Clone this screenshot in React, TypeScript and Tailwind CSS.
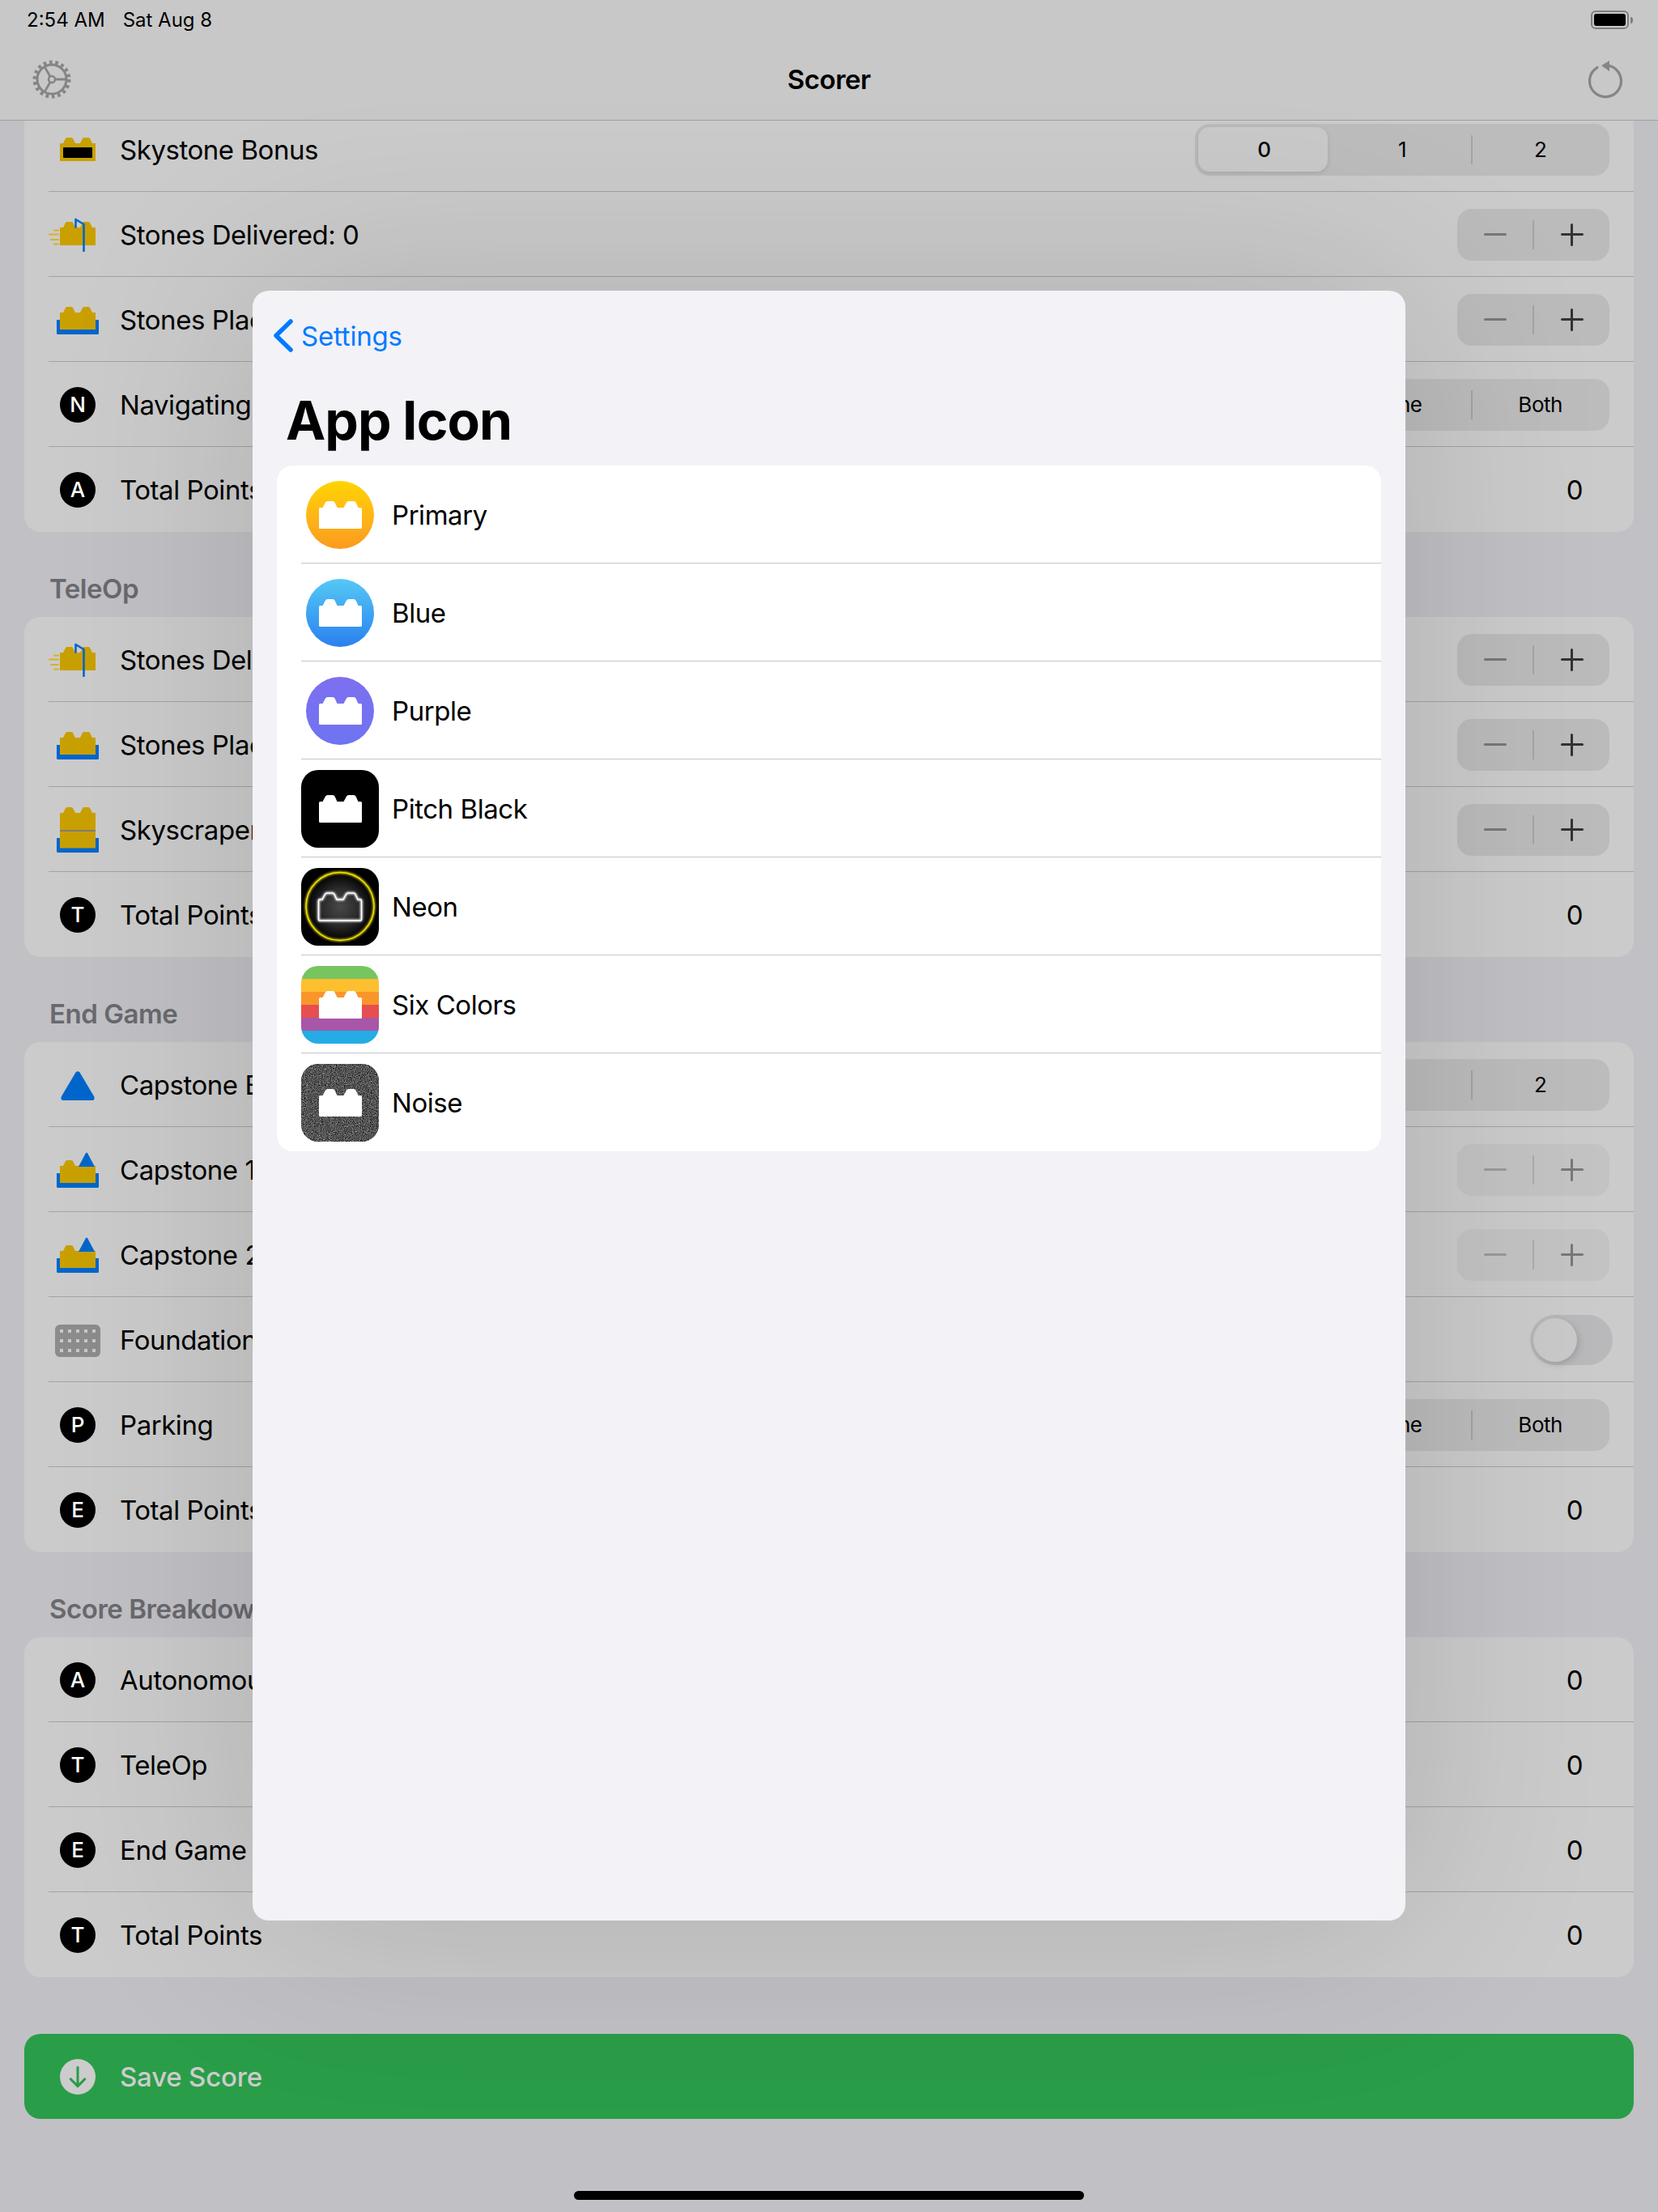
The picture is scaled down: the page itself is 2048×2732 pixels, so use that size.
import React from "react";

const GOLD = "#c9a000";
const BLUE = "#0066cc";
const brickPath = "M1.5 8H4.5L8 1.5Q8.8 0 10.5 0H17Q18.7 0 19.5 1.5L22.5 8H30.5L34 1.5Q34.8 0 36.5 0H43Q44.7 0 45.5 1.5L48.5 8H51.5Q53 8 53 9.5V32.5Q53 34 51.5 34H1.5Q0 34 0 32.5V9.5Q0 8 1.5 8Z";

function Brick({ className = "" }: { className?: string }) {
  return (
    <svg viewBox="0 0 53 34" className={className}>
      <path d={brickPath} fill="#fff" />
    </svg>
  );
}

function SkystoneIcon() {
  return (
    <svg viewBox="0 0 44 29" className="w-[44px] h-[29px] block">
      <path d="M0 7H4L7 1Q7.5 0 9 0H14Q15.5 0 16 1L19 7H25L28 1Q28.5 0 30 0H35Q36.5 0 37 1L40 7H44V29H0Z" fill={GOLD} />
      <rect x="4" y="12" width="36" height="13" rx="1" fill="#000" />
    </svg>
  );
}

function DeliveredIcon() {
  return (
    <svg viewBox="0 0 62 42" className="w-[62px] h-[42px] block mr-[10px]">
      <path d="M14 12H18L21 6Q21.5 5 23 5H28Q29.5 5 30 6L33 12H39L42 6Q42.5 5 44 5H49Q50.5 5 51 6L54 12H58V34H14Z" fill={GOLD} />
      <path d="M33.5 2L43.5 8M33.5 2V11.5M43.5 8V41" stroke={BLUE} strokeWidth="2.6" fill="none" strokeLinecap="round" strokeLinejoin="round" />
      <path d="M7 15.5H12M1 20.5H12M3 27H12M7 32.5H12" stroke="#d6b222" strokeWidth="2" strokeLinecap="round" />
    </svg>
  );
}

function PlacedIcon() {
  return (
    <svg viewBox="0 0 52 34" className="w-[52px] h-[34px] block mt-[3px]">
      <path d="M0 16H4V28H48V16H52V32.5Q52 34 50.5 34H1.5Q0 34 0 32.5Z" fill={BLUE} />
      <path d="M4 7H8L11 1Q11.5 0 13 0H18Q19.5 0 20 1L23 7H29L32 1Q32.5 0 34 0H39Q40.5 0 41 1L44 7H48V28H4Z" fill={GOLD} />
    </svg>
  );
}

function SkyscraperIcon() {
  return (
    <svg viewBox="0 0 52 56" className="w-[52px] h-[56px] block">
      <path d="M0 38H4V50H48V38H52V54.5Q52 56 50.5 56H1.5Q0 56 0 54.5Z" fill={BLUE} />
      <path d="M4 7H8L11 1Q11.5 0 13 0H18Q19.5 0 20 1L23 7H29L32 1Q32.5 0 34 0H39Q40.5 0 41 1L44 7H48V50.5H4Z" fill={GOLD} />
      <rect x="4" y="28" width="44" height="2" fill="#7d7d7d" />
    </svg>
  );
}

function CapTriangle() {
  return (
    <svg viewBox="0 0 42 36" className="w-[42px] h-[36px] block mt-[3px]">
      <path d="M18.5 1.5Q21 -1 23.5 1.5L41 31Q43 36 38 36H4Q-1 36 1 31Z" fill={BLUE} />
    </svg>
  );
}

function CapOnStoneIcon() {
  return (
    <svg viewBox="0 0 52 44" className="w-[52px] h-[44px] block">
      <path d="M0 26H4V38H48V26H52V42.5Q52 44 50.5 44H1.5Q0 44 0 42.5Z" fill={BLUE} />
      <path d="M4 17H8L11 11Q11.5 10 13 10H18Q19.5 10 20 11L23 17H48V38H4Z" fill={GOLD} />
      <path d="M27 18L36 1Q37 0 38 1L47 18Z" fill={BLUE} />
    </svg>
  );
}

function FoundationIcon() {
  return (
    <div className="w-[56px] h-[40px] mt-[3px] rounded-[6px] bg-[#8c8c8c] grid grid-cols-5 gap-x-[6px] gap-y-[8px] px-[6px] py-[6px]">
      {Array.from({ length: 15 }).map((_, i) => (
        <div key={i} className="w-[4px] h-[4px] bg-[#c8c8c8] justify-self-center" />
      ))}
    </div>
  );
}

function LetterIcon({ letter }: { letter: string }) {
  return (
    <div className="w-[44px] h-[44px] rounded-full bg-black text-white flex items-center justify-center text-[26px] font-medium leading-none tracking-normal">
      {letter}
    </div>
  );
}

function Segmented({ items, selected }: { items: string[]; selected?: number }) {
  return (
    <div className="relative w-[512px] h-[64px] rounded-[18px] bg-black/[0.07] flex items-center text-[26px] text-black">
      {items.map((t, i) => (
        <div key={i} className="relative flex-1 h-full flex items-center justify-center">
          {i === selected && (
            <div className="absolute left-[4px] right-[7px] top-[4px] bottom-[5px] rounded-[14px] bg-[#c9c9c9] shadow-[0_2px_6px_rgba(0,0,0,0.1)]" />
          )}
          {i === 2 && <div className="absolute left-0 top-[14px] h-[36px] w-[2px] bg-black/[0.13]" />}
          <span className={`relative ${i === selected ? "font-medium" : ""}`}>{t}</span>
        </div>
      ))}
    </div>
  );
}

function Stepper({ disabled }: { disabled?: boolean }) {
  const c = disabled ? "bg-[#787878]" : "bg-[#333333]";
  const m = disabled ? "bg-[#9a9a9a]" : "bg-[#777777]";
  return (
    <div className={`w-[188px] h-[64px] rounded-[18px] flex items-center ${disabled ? "bg-black/[0.04]" : "bg-black/[0.08]"}`}>
      <div className="flex-1 flex items-center justify-center">
        <div className={`w-[28px] h-[3px] rounded-full ${m}`} />
      </div>
      <div className="w-[2px] h-[36px] bg-black/[0.12]" />
      <div className="flex-1 flex items-center justify-center">
        <div className="relative w-[28px] h-[28px]">
          <div className={`absolute left-0 top-[12.5px] w-[28px] h-[3px] rounded-full ${c}`} />
          <div className={`absolute top-0 left-[12.5px] w-[3px] h-[28px] rounded-full ${c}`} />
        </div>
      </div>
    </div>
  );
}

function Toggle() {
  return (
    <div className="relative w-[102px] h-[62px] rounded-full bg-[#b9b9bb] mr-[-4px]">
      <div className="absolute left-[4px] top-[4px] w-[54px] h-[54px] rounded-full bg-[#c9c9c9] shadow-[2px_3px_8px_rgba(0,0,0,0.15)]" />
    </div>
  );
}

function Value() {
  return <span className="mr-[33px] pt-[1px]">0</span>;
}

function Row({ icon, label, right, last, clip }: { icon: React.ReactNode; label: string; right?: React.ReactNode; last?: boolean; clip?: boolean }) {
  return (
    <div className="h-[105px] pl-[30px]">
      <div className={`h-full flex items-center pr-[30px] ${last ? "" : "shadow-[inset_0_-1px_0_#a3a3a3]"}`}>
        <div className="w-[72px] flex items-center justify-center shrink-0">{icon}</div>
        <div className="ml-[16px] flex-1 min-w-0 pt-[1px]">
          <div className={`whitespace-nowrap ${clip ? "w-[164px] overflow-hidden" : ""}`}>{label}</div>
        </div>
        {right}
      </div>
    </div>
  );
}

function Card({ children }: { children: React.ReactNode }) {
  return <div className="mx-[30px] rounded-[20px] bg-[#cbcbcb] overflow-hidden">{children}</div>;
}

function Header({ children }: { children: React.ReactNode }) {
  return (
    <div className="h-[105px] pl-[61px] pb-[14px] flex items-end text-[#69696d] font-semibold leading-[41px]">
      {children}
    </div>
  );
}

function AppIconRow({ icon, label, last }: { icon: React.ReactNode; label: string; last?: boolean }) {
  return (
    <div className="h-[121px] pl-[30px]">
      <div className={`h-full flex items-center ${last ? "" : "shadow-[inset_0_-1px_0_#c6c6c8]"}`}>
        <div className="w-[96px] h-[96px] flex items-center justify-center shrink-0">{icon}</div>
        <span className="ml-[16px] pt-[1px]">{label}</span>
      </div>
    </div>
  );
}

function Circle({ className }: { className: string }) {
  return (
    <div className={`w-[84px] h-[84px] rounded-full flex items-center justify-center ${className}`}>
      <Brick className="w-[53px] h-[34px]" />
    </div>
  );
}

function Neon() {
  return (
    <svg viewBox="0 0 96 96" className="w-[96px] h-[96px] block rounded-[21px]">
      <defs>
        <radialGradient id="neonbg">
          <stop offset="0" stopColor="#484848" />
          <stop offset="0.55" stopColor="#2a2a2a" />
          <stop offset="1" stopColor="#000" />
        </radialGradient>
        <filter id="glow" x="-30%" y="-30%" width="160%" height="160%">
          <feGaussianBlur stdDeviation="1.6" result="b" />
          <feMerge>
            <feMergeNode in="b" />
            <feMergeNode in="b" />
            <feMergeNode in="SourceGraphic" />
          </feMerge>
        </filter>
      </defs>
      <rect width="96" height="96" fill="#000" />
      <circle cx="48" cy="48" r="42" fill="url(#neonbg)" />
      <circle cx="48" cy="47.5" r="42" fill="none" stroke="#f0e000" strokeWidth="1.5" filter="url(#glow)" />
      <g transform="translate(21.5 31)" filter="url(#glow)">
        <path d={brickPath} fill="none" stroke="#ffffff" strokeWidth="1.5" />
      </g>
    </svg>
  );
}

function SixColors() {
  const colors = ["bg-[#77c55f]", "bg-[#fdbf2f]", "bg-[#f9962a]", "bg-[#e54f4f]", "bg-[#a856a8]", "bg-[#25ace5]"];
  return (
    <div className="relative w-[96px] h-[96px] rounded-[21px] overflow-hidden flex flex-col">
      {colors.map((c) => (
        <div key={c} className={`h-[16px] ${c}`} />
      ))}
      <Brick className="absolute left-[21.5px] top-[31px] w-[53px] h-[34px]" />
    </div>
  );
}

function Noise() {
  return (
    <div className="relative w-[96px] h-[96px] rounded-[21px] overflow-hidden bg-[#555]">
      <svg viewBox="0 0 96 96" className="w-[96px] h-[96px] block">
        <filter id="noise" colorInterpolationFilters="sRGB" x="0" y="0" width="100%" height="100%">
          <feTurbulence type="fractalNoise" baseFrequency="0.9" numOctaves="2" seed="3" />
          <feColorMatrix values="0.55 0.55 0.55 0 -0.5 0.55 0.55 0.55 0 -0.5 0.55 0.55 0.55 0 -0.5 0 0 0 0 1" />
        </filter>
        <rect width="96" height="96" filter="url(#noise)" />
      </svg>
      <Brick className="absolute left-[21.5px] top-[31px] w-[53px] h-[34px]" />
    </div>
  );
}

function Gear() {
  return (
    <svg viewBox="0 0 48 46" className="w-[48px] h-[46px] block overflow-visible">
      <circle cx="24" cy="23" r="21" fill="none" stroke="#858585" strokeWidth="5" strokeDasharray="3.6 3.73" />
      <circle cx="24" cy="23" r="18" fill="none" stroke="#858585" strokeWidth="3" />
      <circle cx="24" cy="23" r="4" fill="none" stroke="#858585" strokeWidth="2.5" />
      <path d="M28 23H42M22 19.5L15 7.4M22 26.5L15 38.6" stroke="#858585" strokeWidth="2.8" fill="none" />
    </svg>
  );
}

function Reset() {
  return (
    <svg viewBox="0 0 42 46" className="w-[42px] h-[46px] block overflow-visible">
      <path d="M25 6.2A19.5 19.5 0 1 1 10 8.3" fill="none" stroke="#858585" strokeWidth="3.2" strokeLinecap="round" />
      <path d="M25 0V13L15 6Z" fill="#858585" />
    </svg>
  );
}

export default function App() {
  return (
    <div
      className="relative w-[2048px] h-[2732px] overflow-hidden bg-[#c0c0c5] text-black text-[33px] leading-[41px] tracking-[-0.45px]"
      style={{ fontFamily: 'Inter, "Noto Sans", sans-serif' }}
    >
      <div className="absolute top-0 left-0 right-0 h-[149px] bg-[#c8c8c8] border-b border-[#a0a0a0] z-10">
        <div className="absolute left-[33px] top-[10px] flex text-[24px] leading-[29px] tracking-normal gap-[22px]">
          <span>2:54 AM</span>
          <span>Sat Aug 8</span>
        </div>
        <div className="absolute left-[1965px] top-[13px] flex items-center">
          <div className="w-[47px] h-[23px] rounded-[6px] border-2 border-[#7f7f7f] p-[2px]">
            <div className="w-full h-full rounded-[3px] bg-black" />
          </div>
          <div className="w-[3px] h-[8px] rounded-r-full bg-[#7f7f7f] ml-[2px]" />
        </div>
        <div className="absolute left-[40px] top-[75px]"><Gear /></div>
        <div className="absolute left-[1963px] top-[75px]"><Reset /></div>
        <div className="absolute left-0 right-0 top-[78px] text-center font-semibold">Scorer</div>
      </div>

      <div className="pt-[132px]">
        <Card>
          <Row icon={<SkystoneIcon />} label="Skystone Bonus" right={<Segmented items={["0", "1", "2"]} selected={0} />} />
          <Row icon={<DeliveredIcon />} label="Stones Delivered: 0" right={<Stepper />} />
          <Row icon={<PlacedIcon />} label="Stones Placed: 0" right={<Stepper />} clip />
          <Row icon={<LetterIcon letter="N" />} label="Navigating" right={<Segmented items={["None", "One", "Both"]} selected={0} />} />
          <Row icon={<LetterIcon letter="A" />} label="Total Points" right={<Value />} last />
        </Card>
        <Header>TeleOp</Header>
        <Card>
          <Row icon={<DeliveredIcon />} label="Stones Delivered: 0" right={<Stepper />} />
          <Row icon={<PlacedIcon />} label="Stones Placed: 0" right={<Stepper />} />
          <Row icon={<SkyscraperIcon />} label="Skyscraper Bonus: 0" right={<Stepper />} />
          <Row icon={<LetterIcon letter="T" />} label="Total Points" right={<Value />} last />
        </Card>
        <Header>End Game</Header>
        <Card>
          <Row icon={<CapTriangle />} label="Capstone Bonus" right={<Segmented items={["0", "1", "2"]} selected={0} />} />
          <Row icon={<CapOnStoneIcon />} label="Capstone 1 Level: 0" right={<Stepper disabled />} />
          <Row icon={<CapOnStoneIcon />} label="Capstone 2 Level: 0" right={<Stepper disabled />} />
          <Row icon={<FoundationIcon />} label="Foundation Moved" right={<Toggle />} />
          <Row icon={<LetterIcon letter="P" />} label="Parking" right={<Segmented items={["None", "One", "Both"]} selected={0} />} />
          <Row icon={<LetterIcon letter="E" />} label="Total Points" right={<Value />} last />
        </Card>
        <Header>Score Breakdown</Header>
        <Card>
          <Row icon={<LetterIcon letter="A" />} label="Autonomous" right={<Value />} />
          <Row icon={<LetterIcon letter="T" />} label="TeleOp" right={<Value />} />
          <Row icon={<LetterIcon letter="E" />} label="End Game" right={<Value />} />
          <Row icon={<LetterIcon letter="T" />} label="Total Points" right={<Value />} last />
        </Card>
        <div className="mt-[70px] mx-[30px] h-[105px] rounded-[20px] bg-[#2a9d48] flex items-center pl-[30px] text-[#cccccc]">
          <div className="w-[72px] flex justify-center">
            <div className="w-[44px] h-[44px] rounded-full bg-[#cccccc] flex items-center justify-center">
              <svg viewBox="0 0 24 24" className="w-[28px] h-[28px]" fill="none" stroke="#2a9d48" strokeWidth="2.6" strokeLinecap="round" strokeLinejoin="round">
                <path d="M12 2V22M4.5 14.5L12 22L19.5 14.5" />
              </svg>
            </div>
          </div>
          <span className="ml-[16px] pt-[1px] font-medium tracking-[-0.2px]">Save Score</span>
        </div>
      </div>

      <div className="absolute left-[709px] top-[2706px] w-[630px] h-[11px] rounded-full bg-black z-20" />

      <div className="absolute left-[312px] top-[359px] w-[1424px] h-[2013px] rounded-[20px] bg-[#f2f2f7] z-20 shadow-[0_0_300px_rgba(0,0,0,0.14)] flex flex-col">
        <div className="h-[112px] flex items-center pl-[26px] text-[#007aff]">
          <svg viewBox="0 0 24 41" className="w-[24px] h-[41px] mt-[-2px]" fill="none" stroke="#007aff" strokeWidth="5.5" strokeLinecap="round" strokeLinejoin="round">
            <path d="M21 3L3 20.5L21 38" />
          </svg>
          <span className="ml-[10px] tracking-[-0.2px]">Settings</span>
        </div>
        <div className="pl-[41px] h-[104px] pt-[7px] text-[66px] leading-[82px] font-bold tracking-[-1px]">App Icon</div>
        <div className="mx-[30px] rounded-[20px] bg-white overflow-hidden">
          <AppIconRow icon={<Circle className="bg-gradient-to-b from-[#ffd400] to-[#fb9a1e]" />} label="Primary" />
          <AppIconRow icon={<Circle className="bg-gradient-to-b from-[#56c8f5] to-[#2c80ee]" />} label="Blue" />
          <AppIconRow icon={<Circle className="bg-gradient-to-b from-[#7d6ff0] to-[#6e74f2]" />} label="Purple" />
          <AppIconRow
            icon={
              <div className="w-[96px] h-[96px] rounded-[21px] bg-black flex items-center justify-center">
                <Brick className="w-[53px] h-[34px]" />
              </div>
            }
            label="Pitch Black"
          />
          <AppIconRow icon={<Neon />} label="Neon" />
          <AppIconRow icon={<SixColors />} label="Six Colors" />
          <AppIconRow icon={<Noise />} label="Noise" last />
        </div>
      </div>
    </div>
  );
}
